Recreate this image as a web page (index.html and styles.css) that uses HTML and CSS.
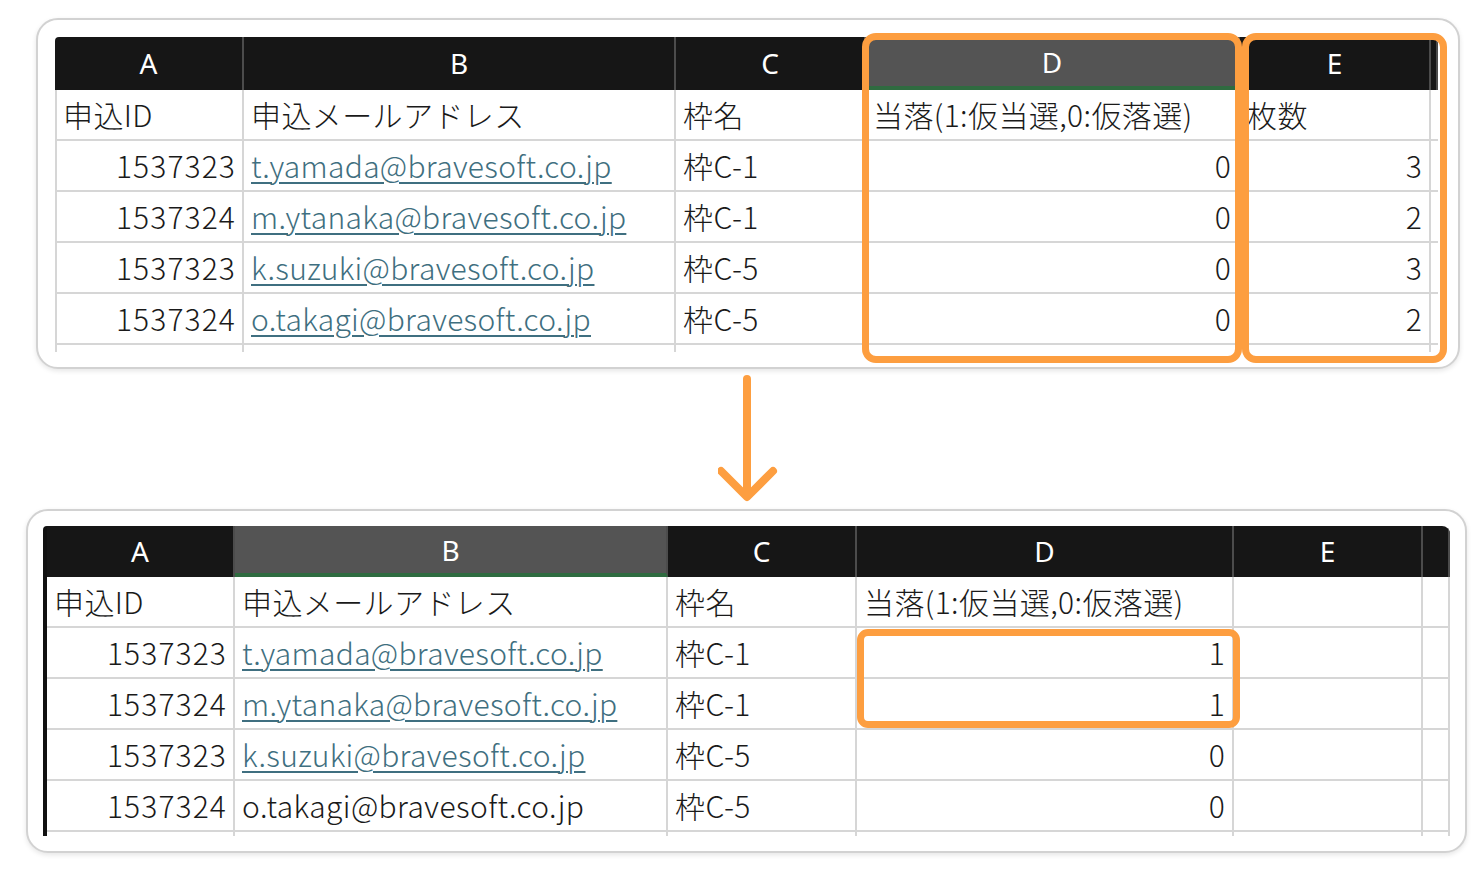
FILE: index.html
```html
<!DOCTYPE html>
<html lang="ja">
<head>
<meta charset="utf-8">
<link rel="stylesheet" href="styles.css">
</head>
<body>
<div class="page">
  <section class="card card-top">
    <div class="sheet-wrap">
      <div class="sheet sheet-top">
        <div class="row head">
          <div class="c h first">A</div>
          <div class="c h">B</div>
          <div class="c h">C</div>
          <div class="c h sel">D</div>
          <div class="c h">E</div>
          <div class="c h">&nbsp;</div>
        </div>
        <div class="row">
          <div class="c first">申込ID</div>
          <div class="c">申込メールアドレス</div>
          <div class="c">枠名</div>
          <div class="c">当落(1:仮当選,0:仮落選)</div>
          <div class="c">枚数</div>
          <div class="c"></div>
        </div>
        <div class="row">
          <div class="c first num">1537323</div>
          <div class="c"><a class="link">t.yamada@bravesoft.co.jp</a></div>
          <div class="c">枠C-1</div>
          <div class="c num">0</div>
          <div class="c num">3</div>
          <div class="c"></div>
        </div>
        <div class="row">
          <div class="c first num">1537324</div>
          <div class="c"><a class="link">m.ytanaka@bravesoft.co.jp</a></div>
          <div class="c">枠C-1</div>
          <div class="c num">0</div>
          <div class="c num">2</div>
          <div class="c"></div>
        </div>
        <div class="row">
          <div class="c first num">1537323</div>
          <div class="c"><a class="link">k.suzuki@bravesoft.co.jp</a></div>
          <div class="c">枠C-5</div>
          <div class="c num">0</div>
          <div class="c num">3</div>
          <div class="c"></div>
        </div>
        <div class="row">
          <div class="c first num">1537324</div>
          <div class="c"><a class="link">o.takagi@bravesoft.co.jp</a></div>
          <div class="c">枠C-5</div>
          <div class="c num">0</div>
          <div class="c num">2</div>
          <div class="c"></div>
        </div>
        <div class="row partial">
          <div class="c first"></div>
          <div class="c"></div>
          <div class="c"></div>
          <div class="c"></div>
          <div class="c"></div>
          <div class="c"></div>
        </div>
      </div>
      <div class="hl hl-top-d"></div>
      <div class="hl hl-top-e"></div>
    </div>
  </section>

  <div class="arrow-area">
    <svg class="arrow" width="70" height="140" viewBox="0 0 70 140">
      <path d="M29 10 V127 M3 102 L29 128 L55 102" fill="none" stroke="#fd9e40" stroke-width="8" stroke-linecap="round" stroke-linejoin="round"/>
    </svg>
  </div>

  <section class="card card-bottom">
    <div class="sheet-wrap">
      <div class="sheet sheet-bottom">
        <div class="row head">
          <div class="c h">A</div>
          <div class="c h sel">B</div>
          <div class="c h">C</div>
          <div class="c h">D</div>
          <div class="c h">E</div>
          <div class="c h">&nbsp;</div>
        </div>
        <div class="row">
          <div class="c">申込ID</div>
          <div class="c">申込メールアドレス</div>
          <div class="c">枠名</div>
          <div class="c">当落(1:仮当選,0:仮落選)</div>
          <div class="c"></div>
          <div class="c"></div>
        </div>
        <div class="row">
          <div class="c num">1537323</div>
          <div class="c"><a class="link">t.yamada@bravesoft.co.jp</a></div>
          <div class="c">枠C-1</div>
          <div class="c num">1</div>
          <div class="c"></div>
          <div class="c"></div>
        </div>
        <div class="row">
          <div class="c num">1537324</div>
          <div class="c"><a class="link">m.ytanaka@bravesoft.co.jp</a></div>
          <div class="c">枠C-1</div>
          <div class="c num">1</div>
          <div class="c"></div>
          <div class="c"></div>
        </div>
        <div class="row">
          <div class="c num">1537323</div>
          <div class="c"><a class="link">k.suzuki@bravesoft.co.jp</a></div>
          <div class="c">枠C-5</div>
          <div class="c num">0</div>
          <div class="c"></div>
          <div class="c"></div>
        </div>
        <div class="row">
          <div class="c num">1537324</div>
          <div class="c">o.takagi@bravesoft.co.jp</div>
          <div class="c">枠C-5</div>
          <div class="c num">0</div>
          <div class="c"></div>
          <div class="c"></div>
        </div>
        <div class="row partial">
          <div class="c"></div>
          <div class="c"></div>
          <div class="c"></div>
          <div class="c"></div>
          <div class="c"></div>
          <div class="c"></div>
        </div>
      </div>
      <div class="hl hl-bottom-d"></div>
    </div>
  </section>
</div>
</body>
</html>
```

FILE: styles.css
```css
* { box-sizing: border-box; }

html, body {
  margin: 0;
  padding: 0;
  background: #ffffff;
}

body {
  font-family: "Noto Sans CJK JP", "Noto Sans", sans-serif;
  color: #1a1a1a;
}

.page {
  width: 1484px;
  height: 872px;
  padding-top: 18px;
  overflow: hidden;
}

.card {
  background: #fff;
  border: 2px solid #d2d2d2;
  border-radius: 22px;
  box-shadow: 0 2px 5px rgba(0, 0, 0, 0.10);
  overflow: visible;
}

.card-top {
  margin-left: 36px;
  width: 1424px;
  height: 351px;
  padding: 17px 0 0 17px;
}

.card-bottom {
  margin-left: 26px;
  width: 1441px;
  height: 344px;
  padding: 15px 0 0 15px;
}

.sheet-wrap {
  position: relative;
}

.sheet {
  overflow: hidden;
  border-radius: 4px 8px 0 0;
}

.sheet-top {
  width: 1383px;
  height: 315px;
}

.sheet-bottom {
  width: 1407px;
  height: 310px;
  border-left: 4px solid #111;
}

.row {
  display: grid;
  height: 51px;
}

.sheet-top .row {
  grid-template-columns: 189px 432px 190px 374px 191px 7px;
}

.sheet-bottom .row {
  grid-template-columns: 188px 433px 189px 377px 189px 27px;
}

.sheet-top .row.head { height: 53px; }
.sheet-bottom .row.head { height: 51px; }

.row.partial { height: 12px; }

.c {
  display: flex;
  align-items: center;
  padding: 0 7px 2px 7px;
  font-size: 30px;
  font-weight: 300;
  line-height: 1;
  letter-spacing: 0.4px;
  white-space: nowrap;
  border-right: 2px solid #d6d6d6;
  border-bottom: 2px solid #d6d6d6;
  overflow: hidden;
}

.row.partial .c { border-bottom: none; }

.c.first { border-left: 2px solid #d6d6d6; padding-left: 6px; }

.c.num {
  justify-content: flex-end;
  letter-spacing: 1.1px;
  padding-right: 6px;
}

.c.h {
  background: #161616;
  color: #fff;
  justify-content: center;
  font-family: "Noto Sans", "Noto Sans CJK JP", sans-serif;
  font-size: 28px;
  font-weight: 400;
  letter-spacing: 0;
  border-bottom: none;
  border-right: 2px solid #4c4c4c;
  padding: 0 0 2px 0;
}

.c.h.first { border-left: none; }

.c.h.sel {
  background: #545454;
  border-bottom: 4px solid #2f6b40;
  padding-top: 2px;
}

.link {
  color: #3f6f80;
  text-decoration: underline;
  text-decoration-thickness: 2px;
  text-underline-offset: 4px;
  letter-spacing: 0.3px;
}

.hl {
  position: absolute;
  border: 7px solid #fd9e40;
  border-radius: 14px;
  z-index: 2;
}

.hl-top-d {
  left: 807px;
  top: -4px;
  width: 380px;
  height: 330px;
}

.hl-top-e {
  left: 1187px;
  top: -4px;
  width: 205px;
  height: 330px;
}

.hl-bottom-d {
  left: 814px;
  top: 103px;
  width: 383px;
  height: 99px;
  border-width: 7px;
  border-radius: 11px;
}

.arrow-area {
  height: 140px;
  padding-left: 718px;
}

.arrow { display: block; }
```
